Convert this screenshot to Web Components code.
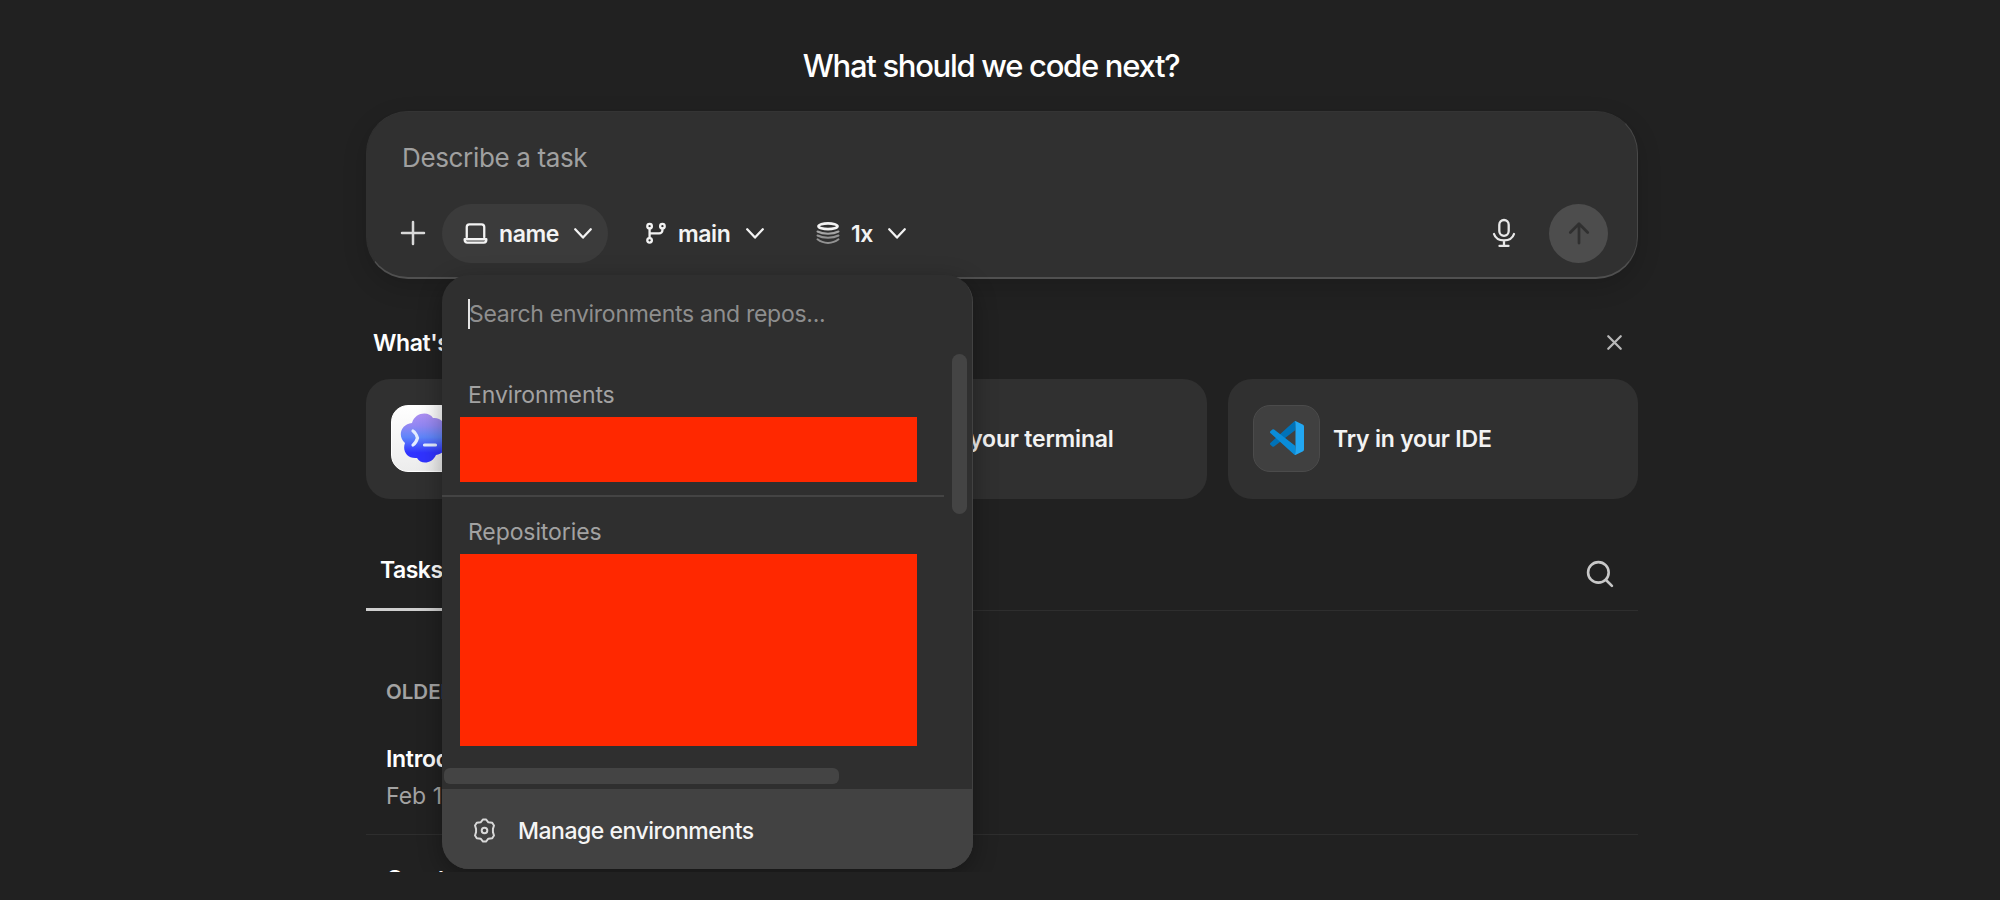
<!DOCTYPE html>
<html lang="en">
<head>
<meta charset="utf-8">
<title>What should we code next?</title>
<style>
  html, body { margin: 0; background: #212121; }
  body { width: 2000px; height: 900px; overflow: hidden; font-family: Inter, "Liberation Sans", sans-serif; color: #fff; }
</style>
</head>
<body>
<code-home></code-home>

<script>
const ICONS = {
  plus: '<path d="M12 1v22M1 12h22"/>',
  laptop: '<path d="M3.600 15.500V5.800A2.600 2.600 0 0 1 6.200 3.200h11.600a2.600 2.600 0 0 1 2.600 2.600v9.700M1.600 17.500h20.800v.8a2.400 2.400 0 0 1-2.400 2.400H4a2.400 2.400 0 0 1-2.400-2.400z"/>',
  chevron: '<path d="M3.500 8l8.500 9 8.500-9"/>',
  branch: '<circle cx="5" cy="4.500" r="2.500"/><circle cx="19" cy="4.500" r="2.500"/><circle cx="5" cy="20" r="2.500"/><path d="M5 7.200v10.100M19 7.200v1.800a3.500 3.500 0 0 1-3.500 3.500H5"/>',
  stack: '<path d="M12 2.400c5 0 9.500 1.400 9.500 2.900s-4.500 2.900-9.500 2.900-9.500-1.400-9.500-2.900 4.500-2.900 9.500-2.900z" stroke-width="2.700"/><path d="M1.500 10.500c3 1.600 6 2.200 10.500 2.200s7.500-.6 10.500-2.200" opacity=".6"/><path d="M1.500 14.500c3 1.600 6 2.200 10.500 2.200s7.500-.6 10.500-2.200" opacity=".5"/><path d="M1.500 18.300c3 2.400 6 3.600 10.500 3.600s7.500-1.200 10.500-3.600" opacity=".5"/>',
  mic: '<rect x="7.300" y="-1" width="9.400" height="15.800" rx="4.700"/><path d="M2 13c1.300 4 5 6.300 10 6.300s8.700-2.300 10-6.300M12 19.500v5M7.500 24.900h9"/>',
  up: '<path d="M12 23V2M2.500 11.500L12 2l9.500 9.500"/>',
  close: '<path d="M2 2l20 20M22 2L2 22"/>',
  search: '<circle cx="10.500" cy="10.500" r="9.500"/><path d="M17.300 17.300l5.700 5.700"/>',
  gear: '<path d="M10.600 1.400h2.800l2.300 2.700 3.700.5 1.700 2.600-1 3.200v3.200l1 3.200-1.700 2.600-3.700.5-2.300 2.700h-2.800l-2.300-2.700-3.700-.5-1.700-2.600 1-3.200v-3.200l-1-3.200 1.700-2.600 3.700-.5z"/><circle cx="12" cy="12" r="2.700"/>'
}

class UiIcon extends HTMLElement {
  constructor() {
    super()
    this.attachShadow({ mode: 'open' })
  }

  connectedCallback() {
    const size = this.getAttribute('size') || 24
    const weight = this.getAttribute('weight') || 2
    this.shadowRoot.innerHTML = `
      <style>
        :host { display: block; flex: none; width: ${size}px; height: ${size}px; }
        svg { display: block; overflow: visible; fill: none; stroke: currentColor; stroke-linecap: round; stroke-linejoin: round; }
      </style>
      <svg width="${size}" height="${size}" viewBox="0 0 24 24" stroke-width="${weight}">${ICONS[this.getAttribute('name')]}</svg>
    `
  }
}
customElements.define('ui-icon', UiIcon)

// registers an element whose shadow root is cloned from a template
const define = (name, html) => {
  const template = document.createElement('template')
  template.innerHTML = html
  customElements.define(name, class extends HTMLElement {
    constructor() {
      super()
      this.attachShadow({ mode: 'open' }).appendChild(template.content.cloneNode(true))
    }
  })
}

define('pill-button', `
  <style>
    :host {
      display: flex;
      align-items: center;
      box-sizing: border-box;
      height: 59px;
      padding: 0 14px 0 21px;
      border-radius: 30px;
      font-size: 23px;
      font-weight: 600;
      letter-spacing: -0.4px;
      color: #f3f3f3;
    }
    :host([active]) { background: #3b3b3b; }
    span { flex: 1; padding: 1px 0 0 11px; }
  </style>
  <slot name="icon"></slot>
  <span><slot></slot></span>
  <ui-icon name="chevron" size="22" weight="2.500"></ui-icon>
`)

define('task-composer', `
  <style>
    :host {
      display: flex;
      flex-direction: column;
      justify-content: space-between;
      box-sizing: border-box;
      height: 168px;
      padding: 28px 29px 14px 34px;
      border: 1px solid #3a3a3a;
      border-top-color: #343434;
      border-left-color: #303030;
      border-right-color: #484848;
      border-bottom: 2px solid #505050;
      border-radius: 42px;
      background: #303030;
      box-shadow: 0 8px 24px rgba(0, 0, 0, .16);
    }
    .prompt { padding-left: 1px; font-size: 26px; line-height: 36px; letter-spacing: -0.35px; color: #a0a0a0; }
    .bar { display: flex; align-items: center; height: 60px; }
    .name { width: 166px; margin-left: 17px; }
    .branch { width: 156px; margin-left: 16px; }
    .runs { width: 127px; margin-left: 15px; }
    .send {
      display: flex;
      align-items: center;
      justify-content: center;
      width: 59px;
      height: 59px;
      border-radius: 50%;
      background: #4d4d4d;
      color: #303030;
      margin-left: 33px;
    }
    .mic { margin-left: auto; color: #e8e8e8; }
  </style>
  <div class="prompt">Describe a task</div>
  <div class="bar">
    <ui-icon name="plus" size="24" weight="2.500" style="color:#d8d8d8"></ui-icon>
    <pill-button class="name" active><ui-icon slot="icon" name="laptop" size="25" weight="2.200"></ui-icon>name</pill-button>
    <pill-button class="branch"><ui-icon slot="icon" name="branch" size="22" weight="2.500"></ui-icon>main</pill-button>
    <pill-button class="runs"><ui-icon slot="icon" name="stack" size="24"></ui-icon>1x</pill-button>
    <ui-icon class="mic" name="mic" size="24" weight="2.300"></ui-icon>
    <div class="send"><ui-icon name="up" size="22" weight="3"></ui-icon></div>
  </div>
`)

define('promo-card', `
  <style>
    :host {
      display: flex;
      align-items: center;
      flex: 1;
      gap: 13px;
      box-sizing: border-box;
      height: 120px;
      padding: 0 0 2px 25px;
      border-radius: 24px;
      background: #303030;
      font-size: 23px;
      font-weight: 600;
      letter-spacing: -0.2px;
      color: #f3f3f3;
    }
    .tile {
      display: flex;
      align-items: center;
      justify-content: center;
      box-sizing: border-box;
      width: 67px;
      height: 67px;
      border: 1px solid #4b4b4b;
      border-radius: 17px;
      background: #404040;
    }
    .text { padding-top: 2px; }
    :host([light]) .tile { background: linear-gradient(#fff, #ececec); border-color: #fff; }
  </style>
  <div class="tile"><slot name="logo"></slot></div>
  <div class="text"><slot></slot></div>
`)

define('task-row', `
  <style>
    :host { display: block; height: 90px; padding-left: 20px; border-bottom: 1px solid #2e2e2e; }
    .title { font-size: 23px; line-height: 30px; font-weight: 600; letter-spacing: -0.3px; }
    .date { margin-top: 7px; font-size: 23px; line-height: 30px; color: #a3a3a3; }
  </style>
  <div class="title"><slot></slot></div>
  <div class="date"><slot name="date"></slot></div>
`)

define('environment-menu', `
  <style>
    :host {
      display: flex;
      flex-direction: column;
      box-sizing: border-box;
      width: 531px;
      height: 594px;
      border-radius: 27px;
      overflow: hidden;
      background: #2f2f2f;
      box-shadow: 0 6px 24px rgba(0, 0, 0, .32), inset -1px -1px 0 #424242;
    }
    .field { display: flex; align-items: center; box-sizing: border-box; height: 79px; padding: 0 0 2px 26px; font-size: 23px; letter-spacing: -0.28px; color: #8e8e8e; }
    .caret { width: 2px; height: 30px; margin-right: -1px; background: #e4e4e4; }
    .lists { display: flex; flex: 1; }
    .lists > div:first-child { width: 503px; }
    .track { display: flex; justify-content: center; width: 29px; }
    .thumb { width: 15px; height: 160px; margin-left: 2px; border-radius: 8px; background: #444; }
    .label { padding: 26px 0 0 26px; font-size: 23px; line-height: 30px; letter-spacing: -0.1px; color: #a2a2a2; }
    .label + .block { margin: 7px 0 0 18px; }
    .block { width: 457px; height: 65px; background: #ff2800; }
    .block.tall { height: 192px; }
    .rule { height: 2px; margin-top: 13px; background: #444; }
    .rule + .label { padding-top: 20px; }
    .across { width: 395px; height: 16px; margin: 22px 0 0 2px; border-radius: 6px; background: #444; }
    .manage { display: flex; align-items: center; gap: 21px; box-sizing: border-box; height: 80px; padding: 3px 0 0 30px; background: #424242; font-size: 23px; font-weight: 500; letter-spacing: -0.48px; color: #f5f5f5; }
  </style>
  <div class="field"><i class="caret"></i>Search environments and repos...</div>
  <div class="lists">
    <div>
      <div class="label">Environments</div>
      <div class="block"></div>
      <div class="rule"></div>
      <div class="label">Repositories</div>
      <div class="block tall"></div>
      <div class="across"></div>
    </div>
    <div class="track"><div class="thumb"></div></div>
  </div>
  <div class="manage"><ui-icon name="gear" size="25" weight="1.900" style="color:#d8d8d8"></ui-icon><span>Manage environments</span></div>
`)

define('code-home', `
  <style>
    :host { display: block; position: relative; height: 872px; overflow: hidden; }
    h1 { margin: 0 18px 0 0; padding-top: 46px; font-size: 31px; line-height: 40px; font-weight: 500; letter-spacing: -1.300px; text-align: center; }
    main { width: 1272px; margin: 25px 0 0 366px; }
    .news { display: flex; align-items: center; justify-content: space-between; height: 30px; margin-top: 49px; padding: 0 16px 0 7px; font-size: 23px; font-weight: 600; letter-spacing: -0.4px; }
    .news ui-icon { margin-bottom: 2px; }
    .cards { display: flex; gap: 21px; margin-top: 21px; }
    .tabs { display: flex; align-items: center; justify-content: space-between; box-sizing: border-box; height: 72px; margin-top: 40px; padding-right: 25px; border-bottom: 1px solid #2e2e2e; }
    .tabs ui-icon { margin-bottom: 1px; }
    .tab { box-sizing: border-box; width: 90px; height: 72px; padding: 16px 0 0 14px; border-bottom: 3px solid #cfcfcf; font-size: 23px; line-height: 30px; font-weight: 600; letter-spacing: -0.5px; }
    h2 { margin: 66px 0 0 20px; padding-bottom: 37px; font-size: 20.500px; line-height: 30px; font-weight: 600; color: #a3a3a3; }
    .next { padding-top: 29px; }
    environment-menu { position: absolute; left: 442px; top: 275px; }
  </style>
  <h1>What should we code next?</h1>
  <main>
    <task-composer></task-composer>
    <div class="news"><span>What's new</span><ui-icon name="close" size="15" weight="3.600" style="color:#b8b8b8"></ui-icon></div>
    <div class="cards">
      <promo-card light>
        <svg slot="logo" width="50" height="50" viewBox="0 0 50 50">
          <defs><linearGradient id="cloud" x1="0" y1="0" x2="0" y2="1"><stop offset="0" stop-color="#ad8ff2"/><stop offset=".25" stop-color="#9187f3"/><stop offset=".48" stop-color="#5f86fa"/><stop offset=".8" stop-color="#3033ff"/></linearGradient></defs>
          <path d="M12 10C15-1 29-2 33 5c10-1 15 9 11 18 6 9 0 18-8 19-4 9-15 10-19 3C7 46 2 38 5 30-3 23 1 11 12 10z" fill="url(#cloud)"/>
          <path d="M13 18q3 2 4.500 7-1.500 5-4.500 7M24.500 32h11" fill="none" stroke="#e4edff" stroke-width="3.200" stroke-linecap="round"/>
        </svg>
        Introducing Codex
      </promo-card>
      <promo-card>
        <ui-icon slot="logo" name="chevron" size="24"></ui-icon>
        Try in your terminal
      </promo-card>
      <promo-card>
        <svg slot="logo" width="34" height="34" viewBox="0 0 100 100">
          <path d="M74 27L12 75q-3 2-5 0l-6-5q-2-3 0-5L70 2q3-2 7-1z" fill="#0072b8"/>
          <path d="M74 73L12 25q-3-2-5 0l-6 5q-2 3 0 5l69 63q3 2 7 1z" fill="#0a8cd8"/>
          <path d="M71 99q4-1 4-5V6q0-4-4-5 3-1 5 0l20 9q4 2 4 6v68q0 4-4 6l-20 9q-2 1-5 0z" fill="#22a7f2"/>
        </svg>
        Try in your IDE
      </promo-card>
    </div>
    <div class="tabs"><div class="tab">Tasks</div><ui-icon name="search" size="26" weight="2.400" style="color:#c8c8c8"></ui-icon></div>
    <h2>OLDER</h2>
    <task-row>Introduce<span slot="date">Feb 10</span></task-row>
    <div class="next"><task-row>Create</task-row></div>
  </main>
  <environment-menu></environment-menu>
`)
</script>
</body>
</html>
